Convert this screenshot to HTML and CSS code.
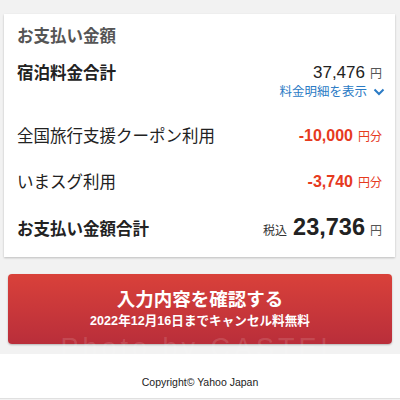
FILE: index.html
```html
<!DOCTYPE html>
<html lang="ja">
<head>
    <meta charset="UTF-8">
    <meta name="viewport" content="width=device-width, initial-scale=1.0">
    <title>お支払い金額</title>
    <link rel="stylesheet" href="styles.css">
</head>
<body>
    <!-- Payment summary -->
    <div class="card">
        <h2 class="card-title">お支払い金額</h2>

        <div class="row row-first">
            <div class="label bold">宿泊料金合計</div>
            <div class="value-col">
                <div class="amount"><span class="num">37,476</span><span class="unit">円</span></div>
                <a href="#" class="detail-link">料金明細を表示
                    <svg width="12" height="8" viewBox="0 0 12 8"><path d="M1.5 1.5 L6 6 L10.5 1.5" fill="none" stroke="#2b7bc5" stroke-width="2"/></svg>
                </a>
            </div>
        </div>

        <div class="row">
            <div class="label">全国旅行支援クーポン利用</div>
            <div class="amount discount"><span class="num">-10,000</span><span class="unit">円分</span></div>
        </div>

        <div class="row">
            <div class="label">いまスグ利用</div>
            <div class="amount discount"><span class="num">-3,740</span><span class="unit">円分</span></div>
        </div>

        <div class="row row-total">
            <div class="label bold">お支払い金額合計</div>
            <div class="amount total"><span class="tax">税込</span><span class="num">23,736</span><span class="unit">円</span></div>
        </div>
    </div>

    <!-- Confirm button -->
    <div class="action">
        <button class="confirm">
            <span class="confirm-main">入力内容を確認する</span>
            <span class="confirm-sub">2022年12月16日までキャンセル料無料</span>
        </button>
        <div class="watermark">Photo by CASTEL</div>
    </div>

    <footer class="footer">Copyright© Yahoo Japan</footer>
</body>
</html>
```

FILE: styles.css
```css
body {
    margin: 0;
    padding: 14px 0 0;
    background-color: #f2f2f2;
    font-family: "Liberation Sans", "Noto Sans CJK JP", sans-serif;
    color: #222;
}
.card {
    margin: 0 5px 0 4px;
    padding: 0 13px 4px 13px;
    background-color: #fff;
    box-shadow: 0 1px 2px rgba(0, 0, 0, 0.22);
}
.card-title {
    margin: 0;
    height: 44px;
    line-height: 44px;
    font-size: 16.5px;
    font-weight: bold;
    color: #555;
}
.row {
    display: flex;
    justify-content: space-between;
    align-items: center;
    height: 46px;
}
.row-first {
    height: auto;
    align-items: flex-start;
    padding: 4px 0 14px;
}
.row-total {
    height: 48px;
}
.label {
    font-size: 16.5px;
    line-height: 22px;
    color: #222;
}
.label.bold {
    font-size: 16.5px;
    font-weight: bold;
}
.value-col {
    display: flex;
    flex-direction: column;
    align-items: flex-end;
}
.amount {
    display: flex;
    align-items: baseline;
    line-height: 22px;
}
.amount .num {
    font-size: 17px;
}
.amount .unit {
    margin-left: 5px;
    font-size: 12px;
    color: #555;
}
.detail-link {
    display: flex;
    align-items: center;
    gap: 6px;
    line-height: 14px;
    font-size: 12.5px;
    color: #2b7bc5;
    text-decoration: none;
    margin-right: -3px;
}
.discount .num {
    font-weight: bold;
    font-size: 16px;
    color: #e63a1e;
}
.discount .unit {
    color: #e63a1e;
}
.total .tax {
    font-size: 12px;
    color: #333;
    margin-right: 6px;
}
.total .num {
    font-size: 23.5px;
    font-weight: bold;
    color: #222;
}
.action {
    position: relative;
    padding: 17px 8px 10px;
}
.confirm {
    display: flex;
    flex-direction: column;
    align-items: center;
    width: 100%;
    height: 70px;
    padding: 14px 0 0;
    border: none;
    border-radius: 4px;
    background: linear-gradient(#d9413a, #b92e3a);
    box-shadow: 0 1px 2px rgba(0, 0, 0, 0.25);
    color: #fff;
    font-family: "Liberation Sans", "Noto Sans CJK JP", sans-serif;
    font-weight: bold;
    cursor: pointer;
}
.confirm-main {
    font-size: 18.5px;
    line-height: 24px;
}
.confirm-sub {
    margin-top: 2px;
    font-size: 12.6px;
    line-height: 14px;
}
.watermark {
    position: absolute;
    left: 0;
    right: 0;
    top: 76px;
    text-align: center;
    font-family: "Liberation Sans", sans-serif;
    font-size: 27px;
    letter-spacing: 4px;
    color: rgba(255, 255, 255, 0.14);
    pointer-events: none;
}
.footer {
    height: 44px;
    line-height: 56px;
    background-color: #fff;
    text-align: center;
    font-size: 10.5px;
    color: #222;
    border-bottom: 1px solid #e0e0e0;
}
```
